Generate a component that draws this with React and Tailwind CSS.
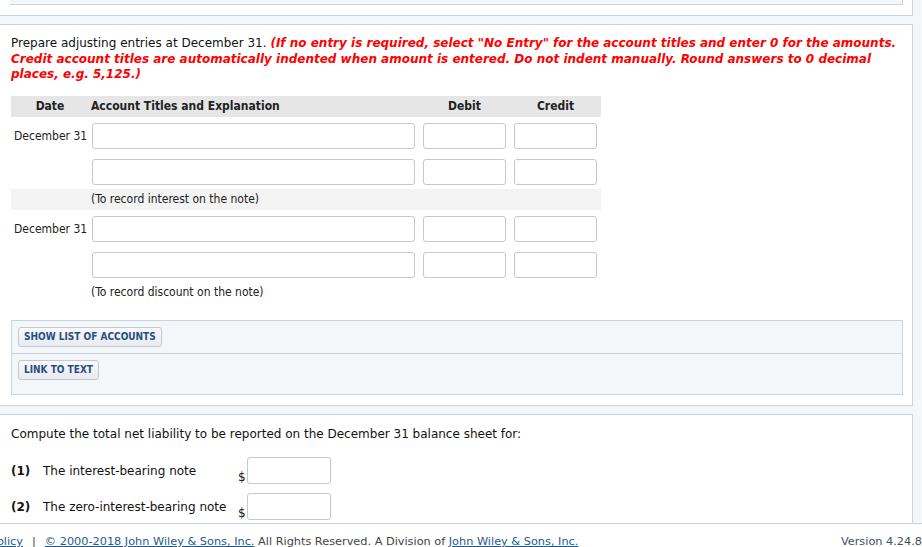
import React from "react";

const verdana = { fontFamily: '"DejaVu Sans", Verdana, sans-serif' };
const tahoma = { fontFamily: '"DejaVu Sans Condensed", "DejaVu Sans", sans-serif' };

function Input({ className = "" }) {
  return (
    <div
      className={
        "h-[26px] rounded-[3px] border border-[#c8c8c8] bg-white " + className
      }
    />
  );
}

function EntryRow({ date }) {
  return (
    <div className="grid grid-cols-[78px_330px_91px_91px] pt-[6px] pb-[4px]">
      <div className="pl-[3px] pt-[4px] text-[12px] text-[#222]">{date}</div>
      <div className="pl-[3px] pr-[4px]">
        <Input />
      </div>
      <div className="pl-[4px] pr-[4px]">
        <Input />
      </div>
      <div className="pl-[4px] pr-[4px]">
        <Input />
      </div>
    </div>
  );
}

function NoteRow({ text, shaded }) {
  return (
    <div
      className={
        "h-[21px] grid grid-cols-[78px_512px] items-center text-[12px] text-[#222] " +
        (shaded ? "bg-[#f3f3f3]" : "")
      }
    >
      <div />
      <div className="pl-[2px]">{text}</div>
    </div>
  );
}

function Btn({ children }) {
  return (
    <div className="flex h-[20px] w-fit items-center rounded-[3px] border border-[#c3c9d2] bg-gradient-to-b from-[#f8f9fb] to-[#e7eaef] px-[5px] text-[10px] leading-[12px] font-bold text-[#284e80]">
      {children}
    </div>
  );
}

export default function App() {
  return (
    <div
      className="relative flex h-[547px] w-[922px] flex-col overflow-hidden bg-[#f4f7fa]"
      style={verdana}
    >
      {/* previous box remnant */}
      <div className="-ml-[1px] h-[16px] w-[914px] shrink-0 border-r border-b border-[#c9d3df] bg-white">
        <div className="ml-[11px] h-[5px] w-[893px] border-r border-b border-[#c9d3df] bg-[#f4f7fa]" />
      </div>
      <div className="h-[8px] shrink-0" />

      {/* main question box */}
      <div className="-ml-[1px] w-[914px] shrink-0 border border-[#c9d3df] bg-white px-[11px] pt-[11px] pb-[10px]">
        <div className="text-[12px] leading-[15.5px] text-[#111]">
          Prepare adjusting entries at December 31.{" "}
          <span className="font-bold italic text-[#ff0000]">
            (If no entry is required, select "No Entry" for the account titles
            and enter 0 for the amounts. Credit account titles are automatically
            indented when amount is entered. Do not indent manually. Round
            answers to 0 decimal places, e.g. 5,125.)
          </span>
        </div>

        <div className="mt-[13px] w-[590px]" style={tahoma}>
          <div className="grid h-[21px] grid-cols-[78px_330px_91px_91px] items-center bg-[#e6e6e6] text-[12px] font-bold text-[#222]">
            <div className="text-center">Date</div>
            <div className="pl-[2px]">Account Titles and Explanation</div>
            <div className="text-center">Debit</div>
            <div className="text-center">Credit</div>
          </div>
          <EntryRow date="December 31" />
          <EntryRow date="" />
          <NoteRow text="(To record interest on the note)" shaded />
          <EntryRow date="December 31" />
          <EntryRow date="" />
          <NoteRow text="(To record discount on the note)" />
        </div>

        <div
          className="mt-[17px] w-[892px] border border-[#c9d3df] bg-[#f4f7fa]"
          style={tahoma}
        >
          <div className="px-[6px] pt-[6px] pb-[6px]">
            <Btn>SHOW LIST OF ACCOUNTS</Btn>
          </div>
          <div className="border-t border-[#c9d3df] px-[6px] pt-[6px] pb-[14px]">
            <Btn>LINK TO TEXT</Btn>
          </div>
        </div>
      </div>

      <div className="h-[8px] shrink-0" />

      {/* second question box */}
      <div className="-ml-[1px] min-h-0 w-[914px] flex-1 overflow-hidden border-t border-r border-l border-[#c9d3df] bg-white px-[11px] pt-[11px]">
        <div className="text-[12px] leading-[16px] text-[#111]">
          Compute the total net liability to be reported on the December 31
          balance sheet for:
        </div>
        <div className="mt-[15px] flex items-start">
          <div className="flex w-[227px] pt-[5px] text-[12px] text-[#111]">
            <span className="w-[32px] font-bold">(1)</span>
            <span>The interest-bearing note</span>
          </div>
          <div className="flex items-end">
            <span className="mr-[1px] text-[12px] text-[#111] leading-[14px]">$</span>
            <div className="h-[27px] w-[84px] rounded-[3px] border border-[#c8c8c8] bg-white" />
          </div>
        </div>
        <div className="mt-[9px] flex items-start">
          <div className="flex w-[227px] pt-[5px] text-[12px] text-[#111]">
            <span className="w-[32px] font-bold">(2)</span>
            <span>The zero-interest-bearing note</span>
          </div>
          <div className="flex items-end">
            <span className="mr-[1px] text-[12px] text-[#111] leading-[14px]">$</span>
            <div className="h-[27px] w-[84px] rounded-[3px] border border-[#c8c8c8] bg-white" />
          </div>
        </div>
      </div>

      {/* footer */}
      <div className="flex h-[24px] shrink-0 items-start justify-between border-t border-[#c9d3df] bg-white pt-[11px] text-[11.3px] leading-[14px] text-[#444]">
        <div className="-ml-[54px] whitespace-nowrap">
          <span className="text-[#1d5a8e] underline">Privacy Policy</span>
          <span className="mx-[9px]">|</span>
          <span className="text-[#1d5a8e] underline">
            © 2000-2018 John Wiley &amp; Sons, Inc.
          </span>{" "}
          All Rights Reserved. A Division of{" "}
          <span className="text-[#1d5a8e] underline">John Wiley &amp; Sons, Inc.</span>
        </div>
        <div className="whitespace-nowrap text-[#3d4f63]">Version 4.24.8</div>
      </div>
    </div>
  );
}
